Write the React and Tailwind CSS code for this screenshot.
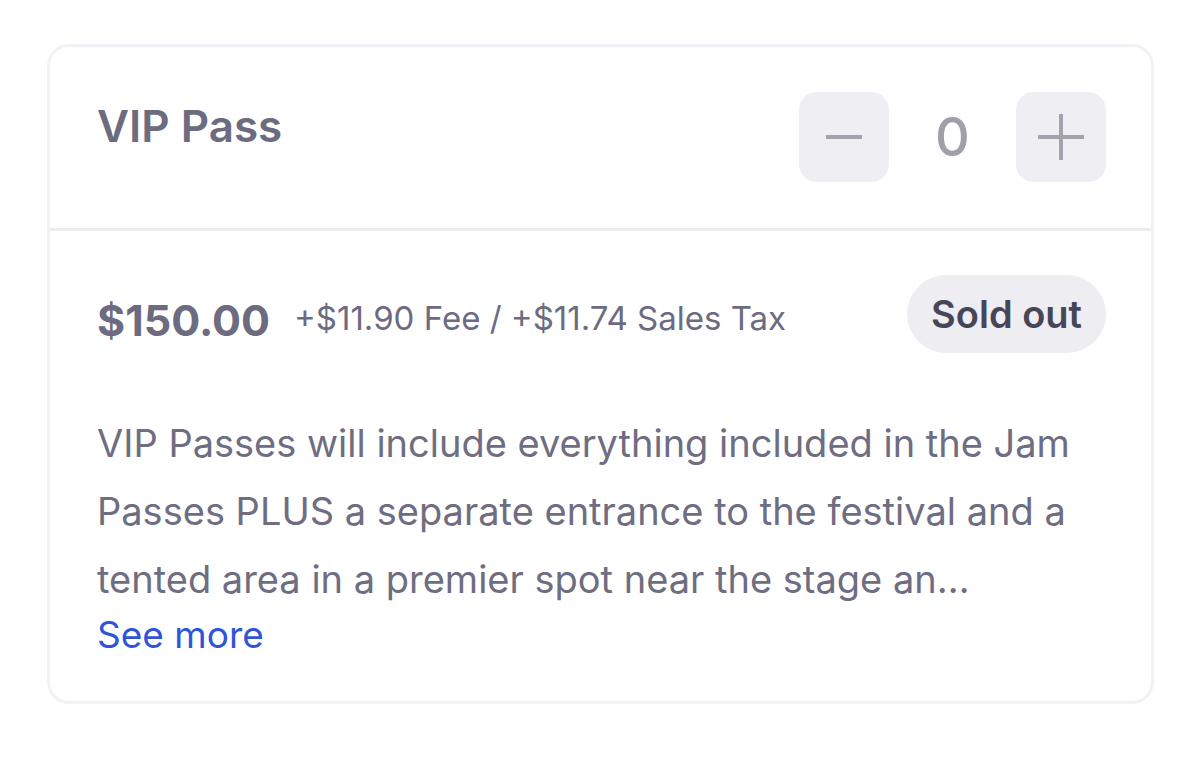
export default function App() {
  return (
    <div className="min-h-[774px] w-[1200px] bg-white pt-[44px] pl-[47px]" style={{ fontFamily: "Inter, 'Noto Sans', sans-serif" }}>
      <div className="w-[1107px] rounded-[22px] border-[3px] border-[#f2f2f6] bg-white">
        {/* header: ticket name + quantity stepper */}
        <div className="flex items-start justify-between border-b-[3px] border-[#ececf1] pl-[47px] pr-[45px] pt-[45px] pb-[46px]">
          <div className="mt-[12px] text-[44px] font-semibold leading-none text-[#6c6b80]">VIP Pass</div>
          <div className="flex items-center">
            <button className="flex h-[90px] w-[90px] items-center justify-center rounded-[18px] bg-[#eeeef3]">
              <svg width="36" height="6" viewBox="0 0 36 6">
                <rect x="0" y="1" width="36" height="4" fill="#a3a2ae" />
              </svg>
            </button>
            <div className="w-[127px] text-center text-[54px] font-medium leading-none text-[#a19fab]">0</div>
            <button className="flex h-[90px] w-[90px] items-center justify-center rounded-[18px] bg-[#eeeef3]">
              <svg width="46" height="46" viewBox="0 0 46 46">
                <rect x="0" y="21" width="46" height="4" fill="#a3a2ae" />
                <rect x="21" y="0" width="4" height="46" fill="#a3a2ae" />
              </svg>
            </button>
          </div>
        </div>
        {/* body: price, status and description */}
        <div className="pl-[47px] pr-[45px] pt-[44px] pb-[44px]">
          <div className="flex items-start justify-between">
            <div className="mt-[24px] flex items-center">
              <span className="text-[43px] font-bold leading-none text-[#6c6b80]">$150.00</span>
              <span className="mb-[4px] ml-[24px] text-[33px] leading-none text-[#6c6b80]">+$11.90 Fee / +$11.74 Sales Tax</span>
            </div>
            <div className="flex h-[78px] items-center rounded-full bg-[#ededf2] px-[24px] text-[38px] font-semibold leading-none text-[#474659]">
              Sold out
            </div>
          </div>
          <div className="mt-[56px] text-[38px] leading-[68px] text-[#6e6d81]">
            <div className="whitespace-nowrap">VIP Passes will include everything included in the Jam</div>
            <div className="whitespace-nowrap">Passes PLUS a separate entrance to the festival and a</div>
            <div className="whitespace-nowrap">tented area in a premier spot near the stage an…</div>
          </div>
          <div className="text-[37px] leading-[44px] text-[#2e55d9]">See more</div>
        </div>
      </div>
    </div>
  );
}
